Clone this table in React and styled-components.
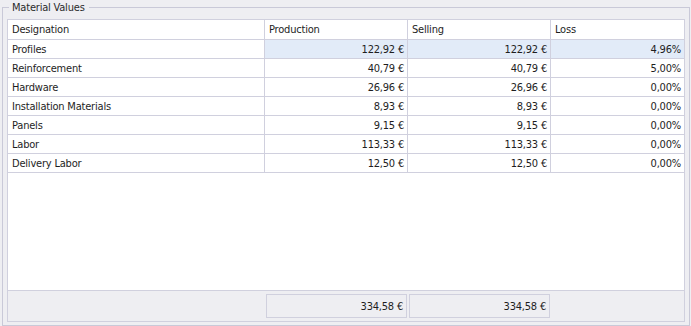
import React from 'react';
import styled, { createGlobalStyle } from 'styled-components';

const GlobalStyle = createGlobalStyle`
  html, body {
    margin: 0;
    padding: 0;
    background: #eeeef2;
  }
  body {
    font-family: "DejaVu Sans Condensed", "DejaVu Sans", sans-serif;
    font-stretch: condensed;
    font-size: 11px;
    letter-spacing: -0.2px;
    color: #1e1e1e;
  }
`;

const GroupBox = styled.fieldset`
  box-sizing: border-box;
  display: flex;
  flex-direction: column;
  width: 688px;
  height: 325px;
  margin: 1px 1px 0 2px;
  padding: 5px 4px 3px 4px;
  border: 1px solid #c9c9d8;
  min-width: 0;
`;

const Legend = styled.legend`
  margin-left: 2px;
  padding: 0 4px 0 3px;
  line-height: 13px;
  color: #2b2b2b;
`;

const Grid = styled.div`
  flex: 1;
  min-height: 0;
  display: flex;
  flex-direction: column;
  background: #fff;
  border: 1px solid #d0d0de;
`;

const Row = styled.div`
  display: grid;
  grid-template-columns: 257px 143px 143px 1fr;
  height: ${(p) => (p.$header ? 20 : 19)}px;
  box-sizing: border-box;
  border-bottom: 1px solid #d0d0de;
`;

const Cell = styled.div`
  box-sizing: border-box;
  display: flex;
  align-items: center;
  justify-content: ${(p) => (p.$right ? 'flex-end' : 'flex-start')};
  padding: 0 3px 0 4px;
  white-space: nowrap;
  overflow: hidden;
  border-right: 1px solid #d0d0de;
  background: ${(p) => (p.$selected ? '#e2ebf8' : 'transparent')};
  &:last-child {
    border-right: none;
  }
`;

const Filler = styled.div`
  flex: 1;
`;

const Footer = styled.div`
  display: grid;
  grid-template-columns: 257px 143px 143px 1fr;
  padding: 3px 0;
  background: #eeeef2;
  border-top: 1px solid #d0d0de;
`;

const TotalBox = styled.div`
  box-sizing: border-box;
  height: 24px;
  margin: 0 1px;
  display: flex;
  align-items: center;
  justify-content: flex-end;
  padding-right: 3px;
  border: 1px solid #d0d0de;
`;

const rows = [
  ['Profiles', '122,92 €', '122,92 €', '4,96%'],
  ['Reinforcement', '40,79 €', '40,79 €', '5,00%'],
  ['Hardware', '26,96 €', '26,96 €', '0,00%'],
  ['Installation Materials', '8,93 €', '8,93 €', '0,00%'],
  ['Panels', '9,15 €', '9,15 €', '0,00%'],
  ['Labor', '113,33 €', '113,33 €', '0,00%'],
  ['Delivery Labor', '12,50 €', '12,50 €', '0,00%'],
];

const App = () => {
  return (
    <>
      <GlobalStyle />
      <GroupBox>
        <Legend>Material Values</Legend>
        <Grid>
          <Row $header>
            <Cell>Designation</Cell>
            <Cell>Production</Cell>
            <Cell>Selling</Cell>
            <Cell>Loss</Cell>
          </Row>
          {rows.map(([name, prod, sell, loss], i) => (
            <Row key={name}>
              <Cell>{name}</Cell>
              <Cell $right $selected={i === 0}>{prod}</Cell>
              <Cell $right $selected={i === 0}>{sell}</Cell>
              <Cell $right $selected={i === 0}>{loss}</Cell>
            </Row>
          ))}
          <Filler />
          <Footer>
            <div />
            <TotalBox>334,58 €</TotalBox>
            <TotalBox>334,58 €</TotalBox>
            <div />
          </Footer>
        </Grid>
      </GroupBox>
    </>
  );
};

export default App;
